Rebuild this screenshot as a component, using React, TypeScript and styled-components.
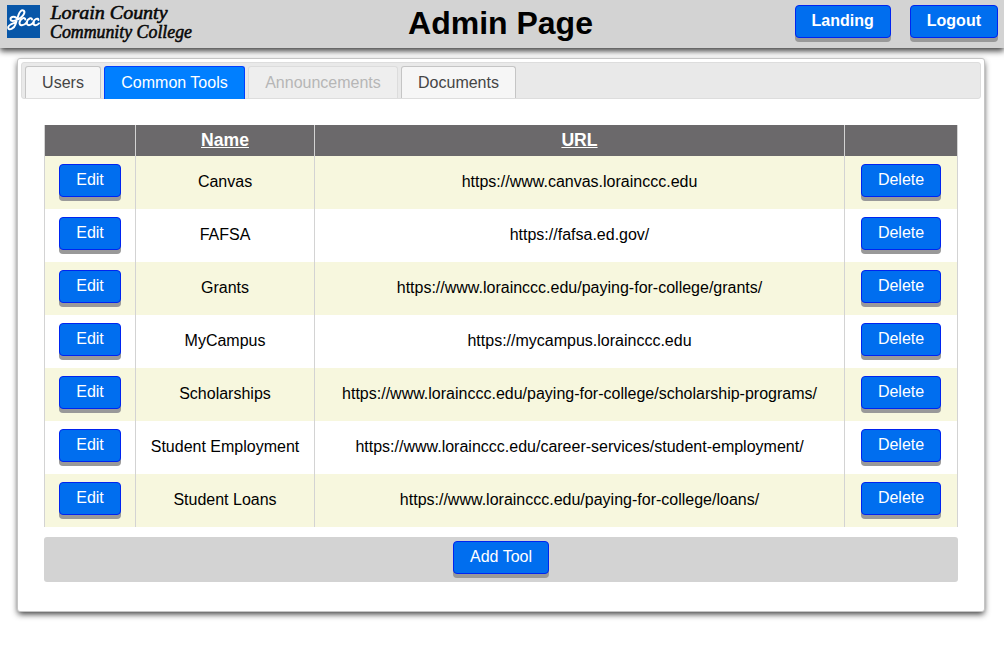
import React from "react";
import styled, { createGlobalStyle, css } from "styled-components";

const GlobalStyle = createGlobalStyle`
  * { box-sizing: border-box; }
  body {
    margin: 0;
    background: #fff;
    color: #000;
    font: 16px/18px "Liberation Sans", Arial, sans-serif;
  }
`;

const Page = styled.div`
  min-height: 669px;
`;

const Header = styled.header`
  display: grid;
  grid-template-columns: 1fr auto 1fr;
  height: 48px;
  padding: 0 6px 0 7px;
  background: #d3d3d3;
  box-shadow: 0 3px 6px rgba(0, 0, 0, 0.75);
`;

const Logo = styled.svg`
  display: block;
  width: 190px;
  height: 48px;
  overflow: visible;
`;

const Title = styled.h1`
  margin: 5px 4px 0 0;
  font-size: 32px;
  line-height: 37px;
`;

const HeaderActions = styled.div`
  display: flex;
  justify-content: flex-end;
  align-items: flex-start;
  gap: 19px;
  padding-top: 5px;
`;

const Button = styled.button<{ $bold?: boolean }>`
  display: block;
  height: 33px;
  margin: 0;
  padding: 0 16px 2px;
  border: 1px solid #0024f0;
  border-radius: 4px;
  background: #006eef;
  box-shadow: 0 4px #999;
  color: #fff;
  font: ${(p) => (p.$bold ? "bold" : "normal")} 16px/29px "Liberation Sans", Arial, sans-serif;
  white-space: nowrap;
`;

const Panel = styled.main`
  width: 968px;
  height: 554px;
  margin: 10px 0 0 17px;
  padding: 3px;
  border: 1px solid #c5c5c5;
  border-radius: 3px;
  box-shadow: 0 3px 6px -1px rgba(0, 0, 0, 0.8);
  background: #fff;
`;

const TabBar = styled.nav`
  display: flex;
  align-items: flex-end;
  gap: 3px;
  height: 37px;
  padding-left: 3px;
  border: 1px solid #ddd;
  border-radius: 3px;
  background: #e9e9e9;
`;

const Tab = styled.div<{ $state?: "active" | "disabled"; $width: number }>`
  width: ${(p) => p.$width}px;
  height: 32px;
  border: 1px solid #c5c5c5;
  border-bottom: 0;
  border-radius: 3px 3px 0 0;
  background: #f6f6f6;
  color: #454545;
  line-height: 32px;
  text-align: center;
  ${(p) =>
    p.$state === "active" &&
    css`
      height: 33px;
      margin-bottom: -1px;
      border-color: #003eff;
      background: #007fff;
      color: #fff;
    `}
  ${(p) =>
    p.$state === "disabled" &&
    css`
      border-color: #dcdcdc;
      background: #eee;
      color: #b6b6b6;
    `}
`;

const Content = styled.section`
  padding: 26px 23px 0;
`;

const Table = styled.table`
  width: 914px;
  table-layout: fixed;
  border-collapse: separate;
  border-spacing: 0;
  border-left: 1px solid #d3d3d3;
  text-align: center;
`;

const HeadCell = styled.th`
  height: 31px;
  padding: 0 0 1px;
  border-right: 1px solid #d3d3d3;
  background: #6b696b;
  color: #fff;
  font-size: 17.6px;
  text-decoration: underline;
`;

const Row = styled.tr`
  height: 53px;
  &:nth-child(odd) {
    background: #f7f7de;
  }
`;

const Cell = styled.td`
  padding: 0 0 1px;
  border-right: 1px solid #d3d3d3;
`;

const ActionCell = styled(Cell)`
  padding: 8px 0 12px;
  ${Button} {
    margin: 0 auto;
  }
`;

const Footer = styled.div`
  display: flex;
  justify-content: center;
  height: 45px;
  margin-top: 10px;
  padding-top: 4px;
  border-radius: 3px;
  background: #d3d3d3;
`;

const tools = [
  ["Canvas", "https://www.canvas.lorainccc.edu"],
  ["FAFSA", "https://fafsa.ed.gov/"],
  ["Grants", "https://www.lorainccc.edu/paying-for-college/grants/"],
  ["MyCampus", "https://mycampus.lorainccc.edu"],
  ["Scholarships", "https://www.lorainccc.edu/paying-for-college/scholarship-programs/"],
  ["Student Employment", "https://www.lorainccc.edu/career-services/student-employment/"],
  ["Student Loans", "https://www.lorainccc.edu/paying-for-college/loans/"],
];

function CollegeLogo() {
  return (
    <Logo viewBox="0 0 190 48">
      <rect x="0" y="5" width="33" height="33" fill="#0756a8" />
      <g fill="none" stroke="#fff" strokeWidth="2" strokeLinecap="round" strokeLinejoin="round">
        <path d="M9 17.6C6.5 15.6 3 17.2 3.6 19.6C4.4 22.2 10.5 20.5 14 17.5C17 15 18.4 11.8 16.6 10.6C14.6 9.4 12.6 11.8 11.6 14.8L8.4 24.5C7.2 28.6 1.6 31 1.2 27.8C0.9 24.8 5 23.8 8 22.6" />
        <path d="M18.3 19.4C18 16.8 13.4 18.4 12.6 22C11.8 26.2 16.4 26.6 19.8 22.4" />
        <path d="M25 19.6C25 17 20.5 18.4 19.8 22C19.2 26.4 24 26 26.6 22.4" />
        <path d="M31.4 20C31.4 17.4 27.1 18.8 26.5 22C26 26 29.5 26 32 23.4" />
      </g>
      <g
        fill="#080808"
        stroke="#080808"
        strokeWidth="0.55"
        fontFamily="'Liberation Serif', 'Times New Roman', serif"
        fontStyle="italic"
      >
        <text x="43.5" y="19" fontSize="19" textLength="117" lengthAdjust="spacingAndGlyphs">Lorain County</text>
        <text x="43" y="38" fontSize="18.5" textLength="142" lengthAdjust="spacingAndGlyphs">Community College</text>
      </g>
    </Logo>
  );
}

export default function App() {
  return (
    <Page>
      <GlobalStyle />
      <Header>
        <CollegeLogo />
        <Title>Admin Page</Title>
        <HeaderActions>
          <Button $bold>Landing</Button>
          <Button $bold>Logout</Button>
        </HeaderActions>
      </Header>
      <Panel>
        <TabBar>
          <Tab $width={76}>Users</Tab>
          <Tab $width={141} $state="active">Common Tools</Tab>
          <Tab $width={150} $state="disabled">Announcements</Tab>
          <Tab $width={115}>Documents</Tab>
        </TabBar>
        <Content>
          <Table>
            <colgroup>
              <col style={{ width: 91 }} />
              <col style={{ width: 179 }} />
              <col style={{ width: 530 }} />
              <col style={{ width: 113 }} />
            </colgroup>
            <thead>
              <tr>
                <HeadCell />
                <HeadCell>Name</HeadCell>
                <HeadCell>URL</HeadCell>
                <HeadCell />
              </tr>
            </thead>
            <tbody>
              {tools.map(([name, url]) => (
                <Row key={name}>
                  <ActionCell><Button>Edit</Button></ActionCell>
                  <Cell>{name}</Cell>
                  <Cell>{url}</Cell>
                  <ActionCell><Button>Delete</Button></ActionCell>
                </Row>
              ))}
            </tbody>
          </Table>
          <Footer><Button>Add Tool</Button></Footer>
        </Content>
      </Panel>
    </Page>
  );
}
